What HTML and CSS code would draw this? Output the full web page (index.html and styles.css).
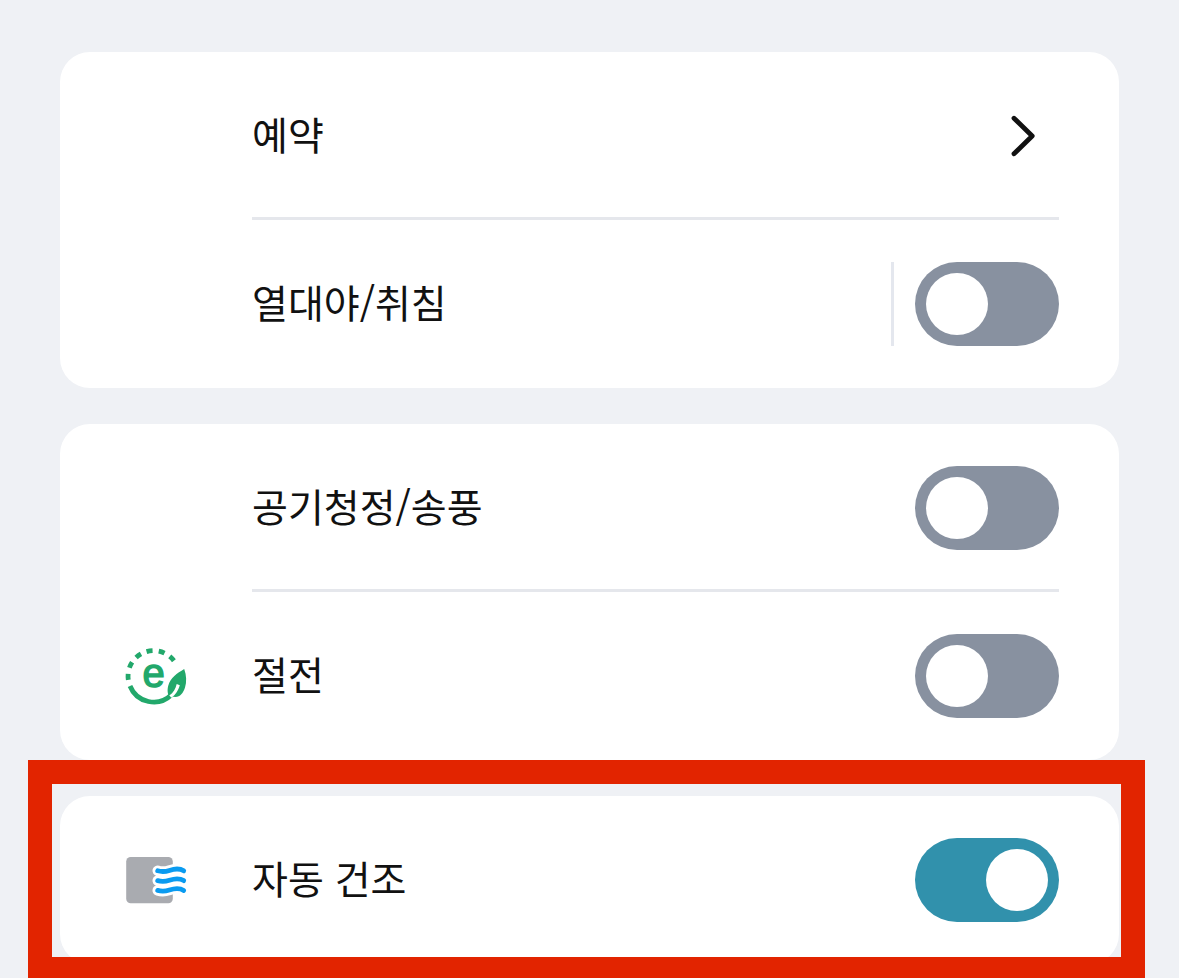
FILE: index.html
```html
<!DOCTYPE html>
<html lang="ko">
<head>
<meta charset="utf-8">
<meta name="viewport" content="width=device-width, initial-scale=1">
<title>설정</title>
<link rel="stylesheet" href="styles.css">
</head>
<body>
<main class="page">
  <section class="card">
    <button class="row" type="button">
      <span class="icon"></span>
      <span class="content divided">
        <span class="label">예약</span>
        <svg class="chevron" viewBox="0 0 72 72" aria-hidden="true"><path d="M27 18.200L45.200 36L27 53.800"/></svg>
      </span>
    </button>
    <div class="row">
      <span class="icon"></span>
      <div class="content">
        <label class="label" for="sleep">열대야/취침</label>
        <span class="separator"></span>
        <input class="switch" id="sleep" type="checkbox" role="switch">
      </div>
    </div>
  </section>

  <section class="card">
    <div class="row">
      <span class="icon"></span>
      <div class="content divided">
        <label class="label" for="air">공기청정/송풍</label>
        <input class="switch" id="air" type="checkbox" role="switch">
      </div>
    </div>
    <div class="row">
      <svg class="icon" viewBox="0 0 72 72" aria-hidden="true">
        <g fill="none" stroke="#22a86b" stroke-width="4.800">
          <path d="M8.300 39.800A25.500 25.500 0 0 1 54.500 21.600" stroke-dasharray="6 6.200"/>
          <path d="M10 46A25.500 25.500 0 0 0 51.500 54.800"/>
        </g>
        <path fill="#22a86b" d="M64.200 29C66.500 35 66.800 42 65 47.500C63.300 53 60 57 55.500 57C53 57 51.500 56.500 50 57C47.500 55 47 50 48.300 45.500C50.500 37.500 57 33.500 64.200 29Z"/>
        <path fill="#fff" d="M56.700 44L59.800 45.300C58.500 50 55.500 55 51.500 57.700L49.300 55.500C53.500 52.500 55.500 49 56.700 44Z"/>
        <text class="eco-letter" x="33.500" y="47" text-anchor="middle">e</text>
      </svg>
      <div class="content">
        <label class="label" for="saving">절전</label>
        <input class="switch" id="saving" type="checkbox" role="switch">
      </div>
    </div>
  </section>

  <section class="card highlighted">
    <div class="row">
      <svg class="icon" viewBox="0 0 72 72" aria-hidden="true">
        <rect x="6.200" y="13" width="46.600" height="46.300" rx="4.500" fill="#a9abb0"/>
        <g fill="none" stroke-linecap="round" stroke-linejoin="round">
          <path stroke="#fff" stroke-width="10.500" d="M37.700 26.800C47 29.500 49 25 57 25Q61 25 63.700 26.800M37.700 36.600C47 39.300 49 34.800 57 34.800Q61 34.800 63.700 36.600M37.700 46.400C47 49.100 49 44.600 57 44.600Q61 44.600 63.700 46.400"/>
          <path stroke="#0a9bf0" stroke-width="4.800" d="M37.700 26.800C47 29.500 49 25 57 25Q61 25 63.700 26.800M37.700 36.600C47 39.300 49 34.800 57 34.800Q61 34.800 63.700 36.600M37.700 46.400C47 49.100 49 44.600 57 44.600Q61 44.600 63.700 46.400"/>
        </g>
      </svg>
      <div class="content">
        <label class="label" for="dry">자동 건조</label>
        <input class="switch" id="dry" type="checkbox" role="switch" checked>
      </div>
    </div>
  </section>
</main>
</body>
</html>
```
FILE: styles.css
```css
* {
  box-sizing: border-box;
}

body {
  margin: 0;
  background: #eff1f5;
  color: #111;
  font-family: "Noto Sans CJK KR", sans-serif;
}

.page {
  display: flex;
  flex-direction: column;
  gap: 36px;
  min-height: 100vh;
  padding: 52px 60px 14px;
  overflow: hidden;
}

.card {
  border-radius: 30px;
  background: #fff;
}

.row {
  display: flex;
  align-items: center;
  gap: 60px;
  width: 100%;
  padding: 0 60px;
  border: 0;
  background: none;
  color: inherit;
  font: inherit;
  text-align: left;
}

.icon {
  flex: none;
  width: 72px;
  height: 72px;
}

.content {
  display: flex;
  flex: 1;
  align-items: center;
  min-height: 168px;
}

.divided {
  box-shadow: inset 0 -3px #e5e7ec;
}

.label {
  flex: 1;
  padding-bottom: 6px;
  font-size: 39px;
  line-height: 56px;
}

.chevron {
  width: 72px;
  height: 72px;
  fill: none;
  stroke: #111;
  stroke-width: 4.8;
  stroke-linecap: round;
  stroke-linejoin: round;
}

.separator {
  width: 3px;
  height: 84px;
  margin-right: 21px;
  background: #e4e7ee;
}

.switch {
  appearance: none;
  display: flex;
  flex: none;
  width: 144px;
  height: 84px;
  margin: 0;
  padding: 11px;
  border-radius: 42px;
  background: #8891a0;
}

.switch::before {
  content: "";
  width: 62px;
  height: 62px;
  border-radius: 50%;
  background: #fff;
}

.switch:checked {
  justify-content: flex-end;
  background: #3191ac;
}

.eco-letter {
  fill: #22a86b;
  stroke: #22a86b;
  stroke-width: 1.4;
  font-family: "Liberation Sans", sans-serif;
  font-size: 40px;
}

.highlighted {
  position: relative;
}

.highlighted::after {
  content: "";
  position: absolute;
  inset: -36px -26px -17px -32px;
  border: 24px solid #e22400;
  pointer-events: none;
}
```
